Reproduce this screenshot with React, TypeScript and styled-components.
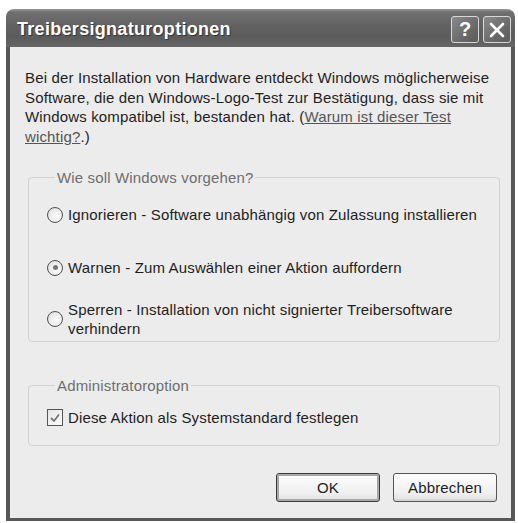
import React from "react";
import styled, { createGlobalStyle } from "styled-components";

const GlobalStyle = createGlobalStyle`
  body {
    margin: 0;
    background: #ffffff;
    font-family: "Liberation Sans", Arial, sans-serif;
    color: #1e1e1e;
  }
`;

const Window = styled.div`
  margin: 9px 0 0 6px;
  width: 509px;
  height: 512px;
  display: flex;
  flex-direction: column;
`;

const TitleBar = styled.div`
  height: 38px;
  display: flex;
  align-items: center;
  padding: 0 4px 0 11px;
  border-radius: 8px 8px 0 0;
  background: linear-gradient(#9a9a9a 0, #707070 3px, #616161 45%, #5c5c5c 75%, #666 100%);
  box-sizing: border-box;
`;

const Title = styled.div`
  flex: 1;
  color: #fff;
  font-weight: bold;
  font-size: 18px;
  letter-spacing: 0.3px;
  text-shadow: 1px 1px 1px #333;
  padding-top: 2px;
`;

const TitleButtons = styled.div`
  display: flex;
  gap: 4px;
  padding-top: 3px;
`;

const TitleButton = styled.div`
  width: 28px;
  height: 27px;
  box-sizing: border-box;
  border: 1px solid #d8d8d8;
  border-radius: 3px;
  background: linear-gradient(135deg, #8a8a8a, #6a6a6a 60%, #5a5a5a);
  display: flex;
  align-items: center;
  justify-content: center;
  color: #fff;
  font-weight: bold;
  font-size: 20px;
`;

const Body = styled.div`
  flex: 1;
  background: #ececec;
  border: 4px solid #575757;
  border-top: none;
  border-bottom-width: 3px;
  padding: 21px 11px 0 15px;
  display: flex;
  flex-direction: column;
  font-size: 15px;
  letter-spacing: 0.15px;
`;

const Intro = styled.p`
  margin: 0;
  line-height: 19.5px;
  white-space: nowrap;
`;

const HelpLink = styled.span`
  color: #555;
  text-decoration: underline;
`;

const Group = styled.fieldset<{ $top: number; $bottom: number }>`
  margin: ${(p) => p.$top}px 0 0 3px;
  padding: 0 11px ${(p) => p.$bottom}px 18px;
  border: 1px solid #d2d2d2;
  border-radius: 4px;
  min-width: 0;
`;

const Legend = styled.legend`
  margin-left: 8px;
  padding: 0 2px;
  line-height: 19px;
  color: #6e6e6e;
`;

const Option = styled.div<{ $top: number }>`
  display: flex;
  align-items: center;
  gap: 5px;
  margin-top: ${(p) => p.$top}px;
  line-height: 19px;
  white-space: nowrap;
`;

const Radio = styled.span<{ $checked?: boolean }>`
  flex: none;
  width: 16px;
  height: 16px;
  box-sizing: border-box;
  border: 1px solid #505050;
  border-radius: 50%;
  background: radial-gradient(circle at 60% 60%, #fdfdfd, #dcdcdc);
  display: flex;
  align-items: center;
  justify-content: center;

  &::after {
    content: "";
    display: ${(p) => (p.$checked ? "block" : "none")};
    width: 5px;
    height: 5px;
    border-radius: 50%;
    background: #777;
  }
`;

const Check = styled.span`
  flex: none;
  width: 16px;
  height: 17px;
  box-sizing: border-box;
  border: 1px solid #555;
  background: linear-gradient(135deg, #e6e6e6, #fbfbfb);
  display: flex;
  align-items: center;
  justify-content: center;
`;

const Buttons = styled.div`
  display: flex;
  justify-content: flex-end;
  gap: 13px;
  margin: 27px 3px 0 0;
`;

const Button = styled.div<{ $default?: boolean }>`
  width: 104px;
  height: 29px;
  box-sizing: border-box;
  border: 1px solid ${(p) => (p.$default ? "#3a3a3a" : "#555")};
  border-radius: 3px;
  box-shadow: ${(p) => (p.$default ? "inset 0 0 0 2px #a8a8a8" : "inset 0 -2px 0 #d6d6d6")};
  background: linear-gradient(#fdfdfd, #f0f0f0 70%, #e2e2e2);
  display: flex;
  align-items: center;
  justify-content: center;
`;

export default function App() {
  return (
    <>
      <GlobalStyle />
      <Window>
        <TitleBar>
          <Title>Treibersignaturoptionen</Title>
          <TitleButtons>
            <TitleButton>?</TitleButton>
            <TitleButton>
              <svg width="16" height="16" viewBox="0 0 16 16">
                <path d="M2 2 L14 14 M14 2 L2 14" stroke="#fff" strokeWidth="2.6" strokeLinecap="round" />
              </svg>
            </TitleButton>
          </TitleButtons>
        </TitleBar>
        <Body>
          <Intro>
            Bei der Installation von Hardware entdeckt Windows möglicherweise
            <br />
            Software, die den Windows-Logo-Test zur Bestätigung, dass sie mit
            <br />
            Windows kompatibel ist, bestanden hat. (<HelpLink>Warum ist dieser Test</HelpLink>
            <br />
            <HelpLink>wichtig?</HelpLink>.)
          </Intro>

          <Group $top={22} $bottom={3}>
            <Legend>Wie soll Windows vorgehen?</Legend>
            <Option $top={18}>
              <Radio />
              <span>Ignorieren - Software unabhängig von Zulassung installieren</span>
            </Option>
            <Option $top={34}>
              <Radio $checked />
              <span>Warnen - Zum Auswählen einer Aktion auffordern</span>
            </Option>
            <Option $top={23}>
              <Radio />
              <span>
                Sperren - Installation von nicht signierter Treibersoftware
                <br />
                verhindern
              </span>
            </Option>
          </Group>

          <Group $top={34} $bottom={18}>
            <Legend>Administratoroption</Legend>
            <Option $top={13}>
              <Check>
                <svg width="12" height="12" viewBox="0 0 12 12">
                  <path d="M2 6 L5 9 L10 2.5" stroke="#777" strokeWidth="1.8" fill="none" />
                </svg>
              </Check>
              <span>Diese Aktion als Systemstandard festlegen</span>
            </Option>
          </Group>

          <Buttons>
            <Button $default>OK</Button>
            <Button>Abbrechen</Button>
          </Buttons>
        </Body>
      </Window>
    </>
  );
}
